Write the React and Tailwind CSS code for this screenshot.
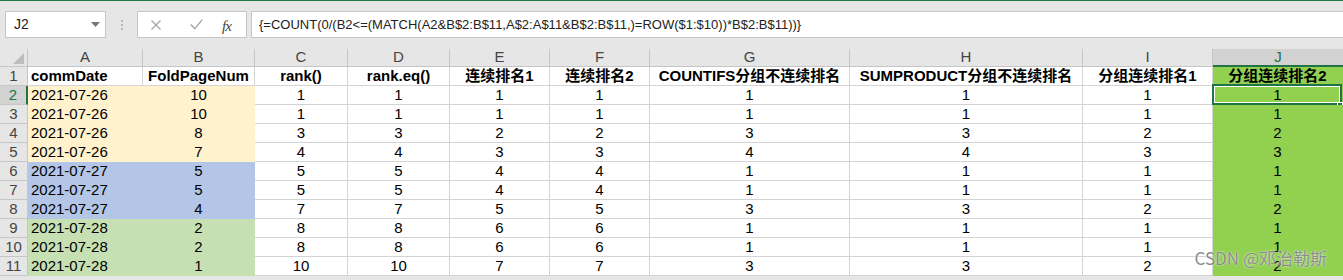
import React from 'react';

const headers = ['commDate', 'FoldPageNum', 'rank()', 'rank.eq()', '连续排名1', '连续排名2', 'COUNTIFS分组不连续排名', 'SUMPRODUCT分组不连续排名', '分组连续排名1', '分组连续排名2'];

const rows = [
  ['2021-07-26', 10, 1, 1, 1, 1, 1, 1, 1, 1],
  ['2021-07-26', 10, 1, 1, 1, 1, 1, 1, 1, 1],
  ['2021-07-26', 8, 3, 3, 2, 2, 3, 3, 2, 2],
  ['2021-07-26', 7, 4, 4, 3, 3, 4, 4, 3, 3],
  ['2021-07-27', 5, 5, 5, 4, 4, 1, 1, 1, 1],
  ['2021-07-27', 5, 5, 5, 4, 4, 1, 1, 1, 1],
  ['2021-07-27', 4, 7, 7, 5, 5, 3, 3, 2, 2],
  ['2021-07-28', 2, 8, 8, 6, 6, 1, 1, 1, 1],
  ['2021-07-28', 2, 8, 8, 6, 6, 1, 1, 1, 1],
  ['2021-07-28', 1, 10, 10, 7, 7, 3, 3, 2, 2],
];

const letters = ['A', 'B', 'C', 'D', 'E', 'F', 'G', 'H', 'I', 'J'];

const fills = {
  white: 'bg-white border-r border-b border-[#d4d4d4]',
  yellow: 'bg-[#fff2cc] border-r border-b border-[#fff2cc]',
  blue: 'bg-[#b4c6e7] border-r border-b border-[#b4c6e7]',
  mint: 'bg-[#c6e0b4] border-r border-b border-[#c6e0b4]',
  green: 'bg-[#92d050] border-r border-b border-[#92d050]',
};

// row number 1..11, col index 0..9
const fillFor = (r, c) => {
  if (c === 9) return fills.green;
  if (c <= 1) {
    if (r >= 2 && r <= 5) return fills.yellow;
    if (r >= 6 && r <= 8) return fills.blue;
    if (r >= 9) return fills.mint;
  }
  return fills.white;
};

const RowHeader = ({ n }) => {
  const selected = n === 2;
  return (
    <div
      className={`h-[19px] flex items-center justify-center text-[15px] border-b ${
        selected
          ? 'bg-[#d2d2d2] text-[#217346] border-b-[#c6c6c6] border-r-2 border-r-[#217346]'
          : 'bg-[#e6e6e6] text-[#444] border-r border-[#c6c6c6]'
      }`}
    >
      {n}
    </div>
  );
};

export default function App() {
  return (
    <div className="w-[1343px] h-[280px] overflow-hidden bg-[#e6e6e6] relative font-['Liberation_Sans','Noto_Sans_CJK_SC',sans-serif] text-black">
      <div className="h-[1px] bg-[#217346]" />

      {/* formula bar */}
      <div className="h-[48px] flex items-start pt-[10px]">
        <div className="ml-[5px] w-[101px] h-[27px] bg-white border border-[#c6c6c6] flex items-center justify-between pl-[8px] pr-[5px] text-[14px] text-[#222]">
          <span>J2</span>
          <svg width="9" height="5" viewBox="0 0 9 5"><path d="M0 0 L9 0 L4.5 5 Z" fill="#777" /></svg>
        </div>
        <div className="w-[31px] h-[27px] flex flex-col items-center justify-center gap-[2px]">
          <span className="w-[2px] h-[2px] bg-[#b5b5b5]" />
          <span className="w-[2px] h-[2px] bg-[#b5b5b5]" />
          <span className="w-[2px] h-[2px] bg-[#b5b5b5]" />
        </div>
        <div className="w-[110px] h-[27px] bg-white border border-[#c6c6c6] relative">
          <svg className="absolute left-[13px] top-[8px]" width="10" height="10" viewBox="0 0 10 10">
            <path d="M0.5 0.5 L9.5 9.5 M9.5 0.5 L0.5 9.5" stroke="#a6a6a6" strokeWidth="1.3" />
          </svg>
          <svg className="absolute left-[52px] top-[7px]" width="13" height="11" viewBox="0 0 13 11">
            <path d="M0.8 5.5 L4.8 9.8 L12.3 0.6" fill="none" stroke="#a6a6a6" strokeWidth="1.4" />
          </svg>
          <span className="absolute left-[84px] top-[3px] text-[15px] italic font-['Liberation_Serif',serif] text-[#444] tracking-[-1px]">fx</span>
        </div>
        <div className="ml-[4px] flex-1 h-[27px] bg-white border border-[#c6c6c6] border-r-0 flex items-center pl-[7px] text-[13px] text-[#222]">
          {'{=COUNT(0/(B2<=(MATCH(A2&B$2:B$11,A$2:A$11&B$2:B$11,)=ROW($1:$10))*B$2:B$11))}'}
        </div>
      </div>

      {/* sheet */}
      <div className="grid grid-cols-[28px_115px_112px_93px_102px_100px_100px_200px_233px_130px_130px] bg-white">
        <div className="h-[18px] bg-[#e6e6e6] border-r border-b border-[#c6c6c6] relative">
          <svg className="absolute right-[3px] bottom-[2px]" width="11" height="11" viewBox="0 0 11 11">
            <path d="M11 0 L11 11 L0 11 Z" fill="#bdbdbd" />
          </svg>
        </div>
        {letters.map((l) =>
          l === 'J' ? (
            <div key={l} className="h-[18px] bg-[#d2d2d2] text-[#217346] border-b-2 border-b-[#217346] flex items-center justify-center text-[15px]">
              {l}
            </div>
          ) : (
            <div key={l} className="h-[18px] bg-[#e6e6e6] text-[#444] border-r border-b border-[#c6c6c6] flex items-center justify-center text-[15px]">
              {l}
            </div>
          )
        )}

        <RowHeader n={1} />
        {headers.map((h, c) => (
          <div
            key={h}
            className={`h-[19px] flex items-center text-[15px] font-bold whitespace-nowrap ${fillFor(1, c)} ${
              c === 0 ? 'justify-start pl-[3px]' : 'justify-center'
            }`}
          >
            {h}
          </div>
        ))}

        {rows.map((row, i) => {
          const r = i + 2;
          return (
            <React.Fragment key={r}>
              <RowHeader n={r} />
              {row.map((v, c) => (
                <div
                  key={c}
                  className={`h-[19px] flex items-center text-[15px] relative ${fillFor(r, c)} ${
                    c === 0 ? 'justify-start pl-[3px]' : 'justify-center'
                  }`}
                >
                  {v}
                  {r === 2 && c === 9 && (
                    <>
                      <span className="absolute -left-[1px] -top-[2px] right-0 bottom-[-1px] border-2 border-[#217346] shadow-[inset_0_0_0_1px_#fff]" />
                      <span className="absolute -right-[1px] bottom-[-4px] w-[6px] h-[6px] bg-[#217346] border border-white" />
                    </>
                  )}
                </div>
              ))}
            </React.Fragment>
          );
        })}
      </div>

      {/* watermark */}
      <div className="absolute right-[16px] top-[248px] text-[17px] leading-[20px] text-[#8c8c8c] font-['Noto_Sans_CJK_SC',sans-serif] [text-shadow:0_0_2px_#fff]">
        CSDN @邓治勒斯
      </div>
    </div>
  );
}
